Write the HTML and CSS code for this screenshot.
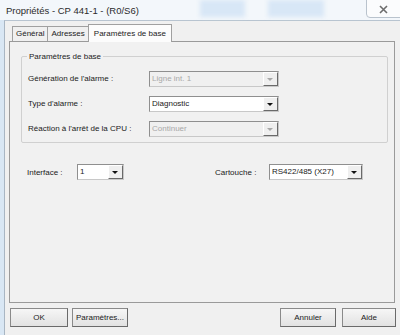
FILE: index.html
```html
<!DOCTYPE html>
<html lang="fr">

<head>
    <meta charset="UTF-8">
    <title>Propriétés - CP 441-1 - (R0/S6)</title>
    <link rel="stylesheet" href="styles.css">
</head>

<body>
    <div class="window">
        <div class="titlebar">
            <span class="title">Propriétés - CP 441-1 - (R0/S6)</span>
            <span class="glass glass-a"></span>
            <span class="glass glass-b"></span>
            <button class="close">
                <svg width="9" height="9" viewBox="0 0 9 9">
                    <path d="M1 1 L8 8 M8 1 L1 8" stroke="#6d6d6d" stroke-width="1.6" />
                </svg>
            </button>
        </div>

        <div class="dialog">
            <div class="tabs">
                <span class="tab">Général</span>
                <span class="tab">Adresses</span>
                <span class="tab active">Paramètres de base</span>
            </div>

            <div class="panel">
                <fieldset class="group">
                    <legend>Paramètres de base</legend>

                    <div class="row">
                        <span class="label">Génération de l'alarme :</span>
                        <div class="combo disabled wide">
                            <span class="value">Ligne int. 1</span>
                            <span class="arrow"></span>
                        </div>
                    </div>

                    <div class="row">
                        <span class="label">Type d'alarme :</span>
                        <div class="combo wide">
                            <span class="value">Diagnostic</span>
                            <span class="arrow"></span>
                        </div>
                    </div>

                    <div class="row">
                        <span class="label">Réaction à l'arrêt de la CPU :</span>
                        <div class="combo disabled wide">
                            <span class="value">Continuer</span>
                            <span class="arrow"></span>
                        </div>
                    </div>
                </fieldset>

                <div class="options">
                    <div class="option">
                        <span class="label-short">Interface :</span>
                        <div class="combo small">
                            <span class="value">1</span>
                            <span class="arrow"></span>
                        </div>
                    </div>
                    <div class="option second">
                        <span class="label-short">Cartouche :</span>
                        <div class="combo medium">
                            <span class="value">RS422/485 (X27)</span>
                            <span class="arrow"></span>
                        </div>
                    </div>
                </div>
            </div>

            <div class="footer">
                <button class="btn btn-ok">OK</button>
                <button class="btn">Paramètres...</button>
                <span class="spacer"></span>
                <button class="btn">Annuler</button>
                <button class="btn btn-help">Aide</button>
            </div>
        </div>
    </div>
</body>

</html>
```

FILE: styles.css
```css
body {
    margin: 0;
    font-family: "Liberation Sans", Arial, sans-serif;
    font-size: 8px;
    color: #1a1a1a;
    background: #d3e3f2;
}

.window {
    width: 400px;
    height: 335px;
    display: flex;
    flex-direction: column;
    background: #d9e7f4;
    overflow: hidden;
}

.titlebar {
    flex-shrink: 0;
    height: 20px;
    position: relative;
    display: flex;
    align-items: center;
    padding-left: 6px;
    background: #f3f7fb;
}

.title {
    font-size: 9.5px;
    color: #2b2b2b;
    margin-top: 1px;
}

.glass {
    position: absolute;
    top: 0;
    height: 17px;
    background: #d8e7f6;
    filter: blur(2px);
}

.glass-a {
    left: 200px;
    width: 45px;
}

.glass-b {
    left: 268px;
    width: 56px;
}

.close {
    position: absolute;
    right: -4px;
    top: -2px;
    width: 38px;
    height: 20px;
    border: 1px solid #b9c3cd;
    border-radius: 0 0 4px 4px;
    background: #fbfcfd;
    display: flex;
    align-items: center;
    justify-content: center;
    padding: 2px 4px 0 0;
}

.dialog {
    flex-shrink: 0;
    height: 311px;
    margin-left: 4px;
    background: #f0f0f0;
    border-top: 1px solid #b8c4d0;
    border-left: 1px solid #a9b6c3;
    border-bottom: 1px solid #a9b6c3;
    display: flex;
    flex-direction: column;
    padding: 3px 5px 0 4px;
}

.tabs {
    flex-shrink: 0;
    display: flex;
    padding-left: 3px;
    height: 17px;
    align-items: flex-end;
}

.tab {
    height: 14px;
    line-height: 14px;
    padding: 0 3px;
    border: 1px solid #a0a0a0;
    border-bottom: none;
    margin-right: -1px;
    background: #f0f0f0;
    color: #222;
    font-size: 8px;
}

.tab.active {
    height: 17px;
    line-height: 17px;
    background: #fcfcfc;
    padding: 0 5px;
    margin-bottom: -1px;
    position: relative;
    z-index: 1;
}

.panel {
    flex-shrink: 0;
    height: 262px;
    box-sizing: border-box;
    border: 1px solid #9a9a9a;
    background: #f1f1f1;
    padding: 10px 6px 0 11px;
}

.group {
    margin: 0;
    height: 84px;
    border: 1px solid #d0d0d0;
    border-radius: 2px;
    padding: 5px 6px 0 6px;
}

.group legend {
    padding: 0 2px;
    margin-left: -1px;
    color: #222;
}

.row {
    display: flex;
    align-items: center;
    height: 25px;
}

.label {
    width: 121px;
}

.combo {
    height: 14px;
    display: flex;
    border: 1px solid #8f8f8f;
    border-right-color: #c8c8c8;
    border-bottom-color: #c8c8c8;
    background: #ffffff;
}

.combo .value {
    flex: 1;
    padding-left: 2px;
    line-height: 14px;
    white-space: nowrap;
}

.combo .arrow {
    width: 13px;
    border: 1px solid #ffffff;
    border-right-color: #6a6a6a;
    border-bottom-color: #6a6a6a;
    background: #efefef;
    position: relative;
}

.combo .arrow::after {
    content: "";
    position: absolute;
    left: 3px;
    top: 5px;
    border-left: 3px solid transparent;
    border-right: 3px solid transparent;
    border-top: 3px solid #111;
}

.combo.disabled {
    background: #f0f0f0;
    color: #a8a8a8;
}

.combo.disabled .arrow::after {
    border-top-color: #a8a8a8;
}

.wide {
    width: 128px;
}

.small {
    width: 45px;
}

.medium {
    width: 92px;
}

.options {
    display: flex;
    margin-top: 21px;
    padding-left: 6px;
}

.option {
    display: flex;
    align-items: center;
}

.option.second {
    margin-left: 91px;
}

.label-short {
    width: 50px;
}

.option.second .label-short {
    width: 54px;
}

.footer {
    display: flex;
    align-items: center;
    padding: 5px 0 0 1px;
    gap: 4px;
}

.spacer {
    flex: 1;
}

.btn {
    height: 19px;
    width: 56px;
    font-family: inherit;
    font-size: 8px;
    color: #222;
    background: linear-gradient(#f6f6f6, #e2e2e2);
    border: 1px solid #8a8a8a;
    border-right-color: #6a6a6a;
    border-bottom-color: #6a6a6a;
    padding: 0;
}

.btn-ok {
    width: 58px;
}

.btn-help {
    width: 54px;
    margin-left: 2px;
    margin-right: -1px;
}
```
